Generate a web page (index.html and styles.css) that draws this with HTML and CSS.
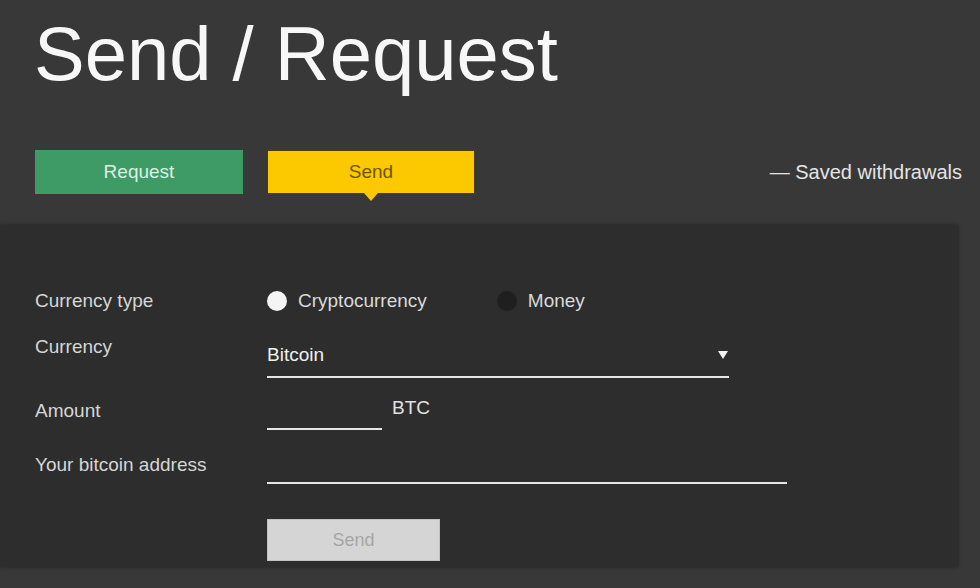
FILE: index.html
```html
<!DOCTYPE html>
<html lang="en">
<head>
    <meta charset="UTF-8">
    <title>Send / Request</title>
    <link rel="stylesheet" href="styles.css">
</head>
<body>
    <h1 class="title">Send / Request</h1>
    <div class="tabs">
        <div class="tab-list">
            <a class="tab request">Request</a>
            <a class="tab send active">Send</a>
        </div>
        <a class="saved">&mdash; Saved withdrawals</a>
    </div>
    <main class="panel">
        <div class="row row-type">
            <span class="label">Currency type</span>
            <div class="radios">
                <label class="radio"><span class="dot on"></span>Cryptocurrency</label>
                <label class="radio"><span class="dot"></span>Money</label>
            </div>
        </div>
        <div class="row row-currency">
            <span class="label">Currency</span>
            <div class="select">
                <span>Bitcoin</span>
                <svg width="10" height="8" viewBox="0 0 10 8"><path d="M0 0h10L5 8z" fill="#f2f2f2"/></svg>
            </div>
        </div>
        <div class="row row-amount">
            <span class="label">Amount</span>
            <div class="field amount"></div>
            <span class="unit">BTC</span>
        </div>
        <div class="row row-address">
            <span class="label">Your bitcoin address</span>
            <div class="field address"></div>
        </div>
        <button class="submit" disabled>Send</button>
    </main>
</body>
</html>
```

FILE: styles.css
```css
*{
    box-sizing: border-box;
}

html, body{
    margin: 0;
    height: 100%;
}

body{
    background-color: #383838;
    font-family: "Liberation Sans", Arial, Helvetica, sans-serif;
    overflow: hidden;
}

.title{
    margin: 0;
    padding: 15px 0 0 34px;
    font-size: 76px;
    line-height: 77px;
    font-weight: normal;
    color: #f7f7f7;
}

.tabs{
    display: flex;
    justify-content: space-between;
    align-items: center;
    margin-top: 58px;
    padding: 0 18px 0 35px;
    height: 44px;
}

.tab-list{
    display: flex;
    gap: 24px;
}

.tab{
    display: flex;
    align-items: center;
    justify-content: center;
    width: 208px;
    height: 44px;
    font-size: 19px;
    cursor: pointer;
    position: relative;
}
.request{
    background-color: #3f9b66;
    color: #dcefe2;
}
.send{
    background-color: #fcc800;
    border: 1px solid #4d3d0a;
    color: #6d5500;
}
.send.active::after{
    content: "";
    position: absolute;
    left: 50%;
    top: 100%;
    margin-left: -7px;
    border-left: 7px solid transparent;
    border-right: 7px solid transparent;
    border-top: 8px solid #fcc800;
}

.saved{
    font-size: 20px;
    color: #e4e4e4;
    cursor: pointer;
}

.panel{
    margin: 31px 22px 0 0;
    height: 342px;
    padding: 63px 0 0 35px;
    background-color: #2d2d2d;
    box-shadow: 0 0 3px rgba(0, 0, 0, .45);
    font-size: 19px;
    color: #d6d6d6;
}

.row{
    display: flex;
    align-items: flex-start;
}
.label{
    width: 232px;
    line-height: 26px;
    flex-shrink: 0;
}

.radios{
    display: flex;
    gap: 70px;
}
.radio{
    display: flex;
    align-items: center;
    gap: 11px;
    line-height: 26px;
    color: #dadada;
}
.dot{
    width: 20px;
    height: 20px;
    border-radius: 50%;
    background-color: #1f1f1f;
}
.dot.on{
    background-color: #f4f4f4;
}

.row-currency{
    margin-top: 20px;
}
.select{
    display: flex;
    justify-content: space-between;
    align-items: center;
    width: 462px;
    margin-top: 8px;
    padding: 0 1px 8px 0;
    line-height: 26px;
    color: #f0f0f0;
    border-bottom: 2px solid #e6e6e6;
}

.field{
    height: 32px;
    border-bottom: 2px solid #e6e6e6;
}
.row-amount{
    margin-top: 20px;
}
.amount{
    width: 115px;
}
.unit{
    margin: -3px 0 0 10px;
    line-height: 26px;
    color: #e2e2e2;
}

.row-address{
    margin-top: 22px;
}
.address{
    width: 520px;
}

.submit{
    display: block;
    margin: 35px 0 0 232px;
    width: 173px;
    height: 42px;
    background-color: #d5d5d5;
    border: 1px solid #c2c2c2;
    font-family: inherit;
    font-size: 18px;
    color: #a6a6a6;
}
```
